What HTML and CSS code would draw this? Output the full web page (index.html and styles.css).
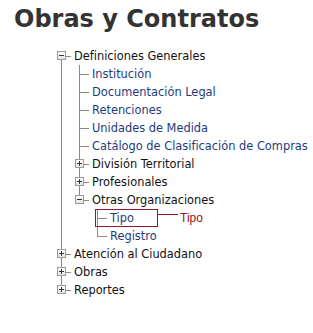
FILE: index.html
```html
<!DOCTYPE html>
<html lang="es">
<head>
  <meta charset="UTF-8" />
  <title>Obras y Contratos</title>
  <link rel="stylesheet" href="styles.css">
</head>
<body>
  <h1>Obras y Contratos</h1>
  <ul class="tree">
    <li class="first">
      <span class="toggle open"></span><span class="label">Definiciones Generales</span>
      <ul>
        <li><a href="#">Institución</a></li>
        <li><a href="#">Documentación Legal</a></li>
        <li><a href="#">Retenciones</a></li>
        <li><a href="#">Unidades de Medida</a></li>
        <li><a href="#">Catálogo de Clasificación de Compras</a></li>
        <li><span class="toggle"></span><span class="label">División Territorial</span></li>
        <li><span class="toggle"></span><span class="label">Profesionales</span></li>
        <li class="last">
          <span class="toggle open"></span><span class="label">Otras Organizaciones</span>
          <ul>
            <li>
              <a href="#">Tipo</a>
              <span class="callout"><span class="callout-text">Tipo</span></span>
            </li>
            <li class="last"><a href="#">Registro</a></li>
          </ul>
        </li>
      </ul>
    </li>
    <li><span class="toggle"></span><span class="label">Atención al Ciudadano</span></li>
    <li><span class="toggle"></span><span class="label">Obras</span></li>
    <li class="last"><span class="toggle"></span><span class="label">Reportes</span></li>
  </ul>
</body>
</html>
```

FILE: styles.css
```css
body {
  margin: 0;
  background: #fff;
  font-family: 'DejaVu Sans', sans-serif;
}
h1 {
  margin: 5px 0 0 14px;
  font-size: 24px;
  line-height: 28px;
  font-weight: bold;
  color: #333;
}
.tree, .tree ul {
  list-style: none;
  margin: 0;
  padding: 0;
}
.tree {
  margin: 14px 0 0 57px;
}
/* children sit 18px to the right of their parent */
.tree ul {
  margin-left: -17px;
  padding-left: 18px;
}
.tree li {
  position: relative;
  padding-left: 17px;
  font-size: 11.4px;
  line-height: 18px;
  color: #111;
  white-space: nowrap;
}
/* vertical connector */
.tree li::before {
  content: "";
  position: absolute;
  left: 4px;
  top: 0;
  bottom: 0;
  border-left: 1px solid #8a8a8a;
}
.tree li.first::before {
  top: 9px;
}
.tree li.last::before {
  bottom: auto;
  height: 9px;
}
/* horizontal connector */
.tree li::after {
  content: "";
  position: absolute;
  left: 4px;
  top: 9px;
  width: 10px;
  border-top: 1px solid #8a8a8a;
}
.tree a {
  color: #1d3c7c;
  text-decoration: none;
}
.toggle {
  position: absolute;
  left: 0;
  top: 4px;
  width: 7px;
  height: 7px;
  border: 1px solid #9a9a9a;
  background: linear-gradient(#fff, #e4e4e4);
  z-index: 1;
}
.toggle::before {
  content: "";
  position: absolute;
  left: 1px;
  top: 3px;
  width: 5px;
  height: 1px;
  background: #333;
}
.toggle::after {
  content: "";
  position: absolute;
  left: 3px;
  top: 1px;
  width: 1px;
  height: 5px;
  background: #333;
}
.toggle.open::after {
  display: none;
}
.callout {
  position: absolute;
  left: 2px;
  top: 0;
  width: 61px;
  height: 16px;
  border: 1px solid #8b1a2e;
}
.callout::after {
  content: "";
  position: absolute;
  left: 61px;
  top: 4px;
  width: 21px;
  border-top: 1px solid #8b1a2e;
}
.callout-text {
  position: absolute;
  left: 84px;
  top: -1px;
  color: #9b1020;
  font-family: 'Liberation Sans', sans-serif;
  font-size: 12px;
}
```
